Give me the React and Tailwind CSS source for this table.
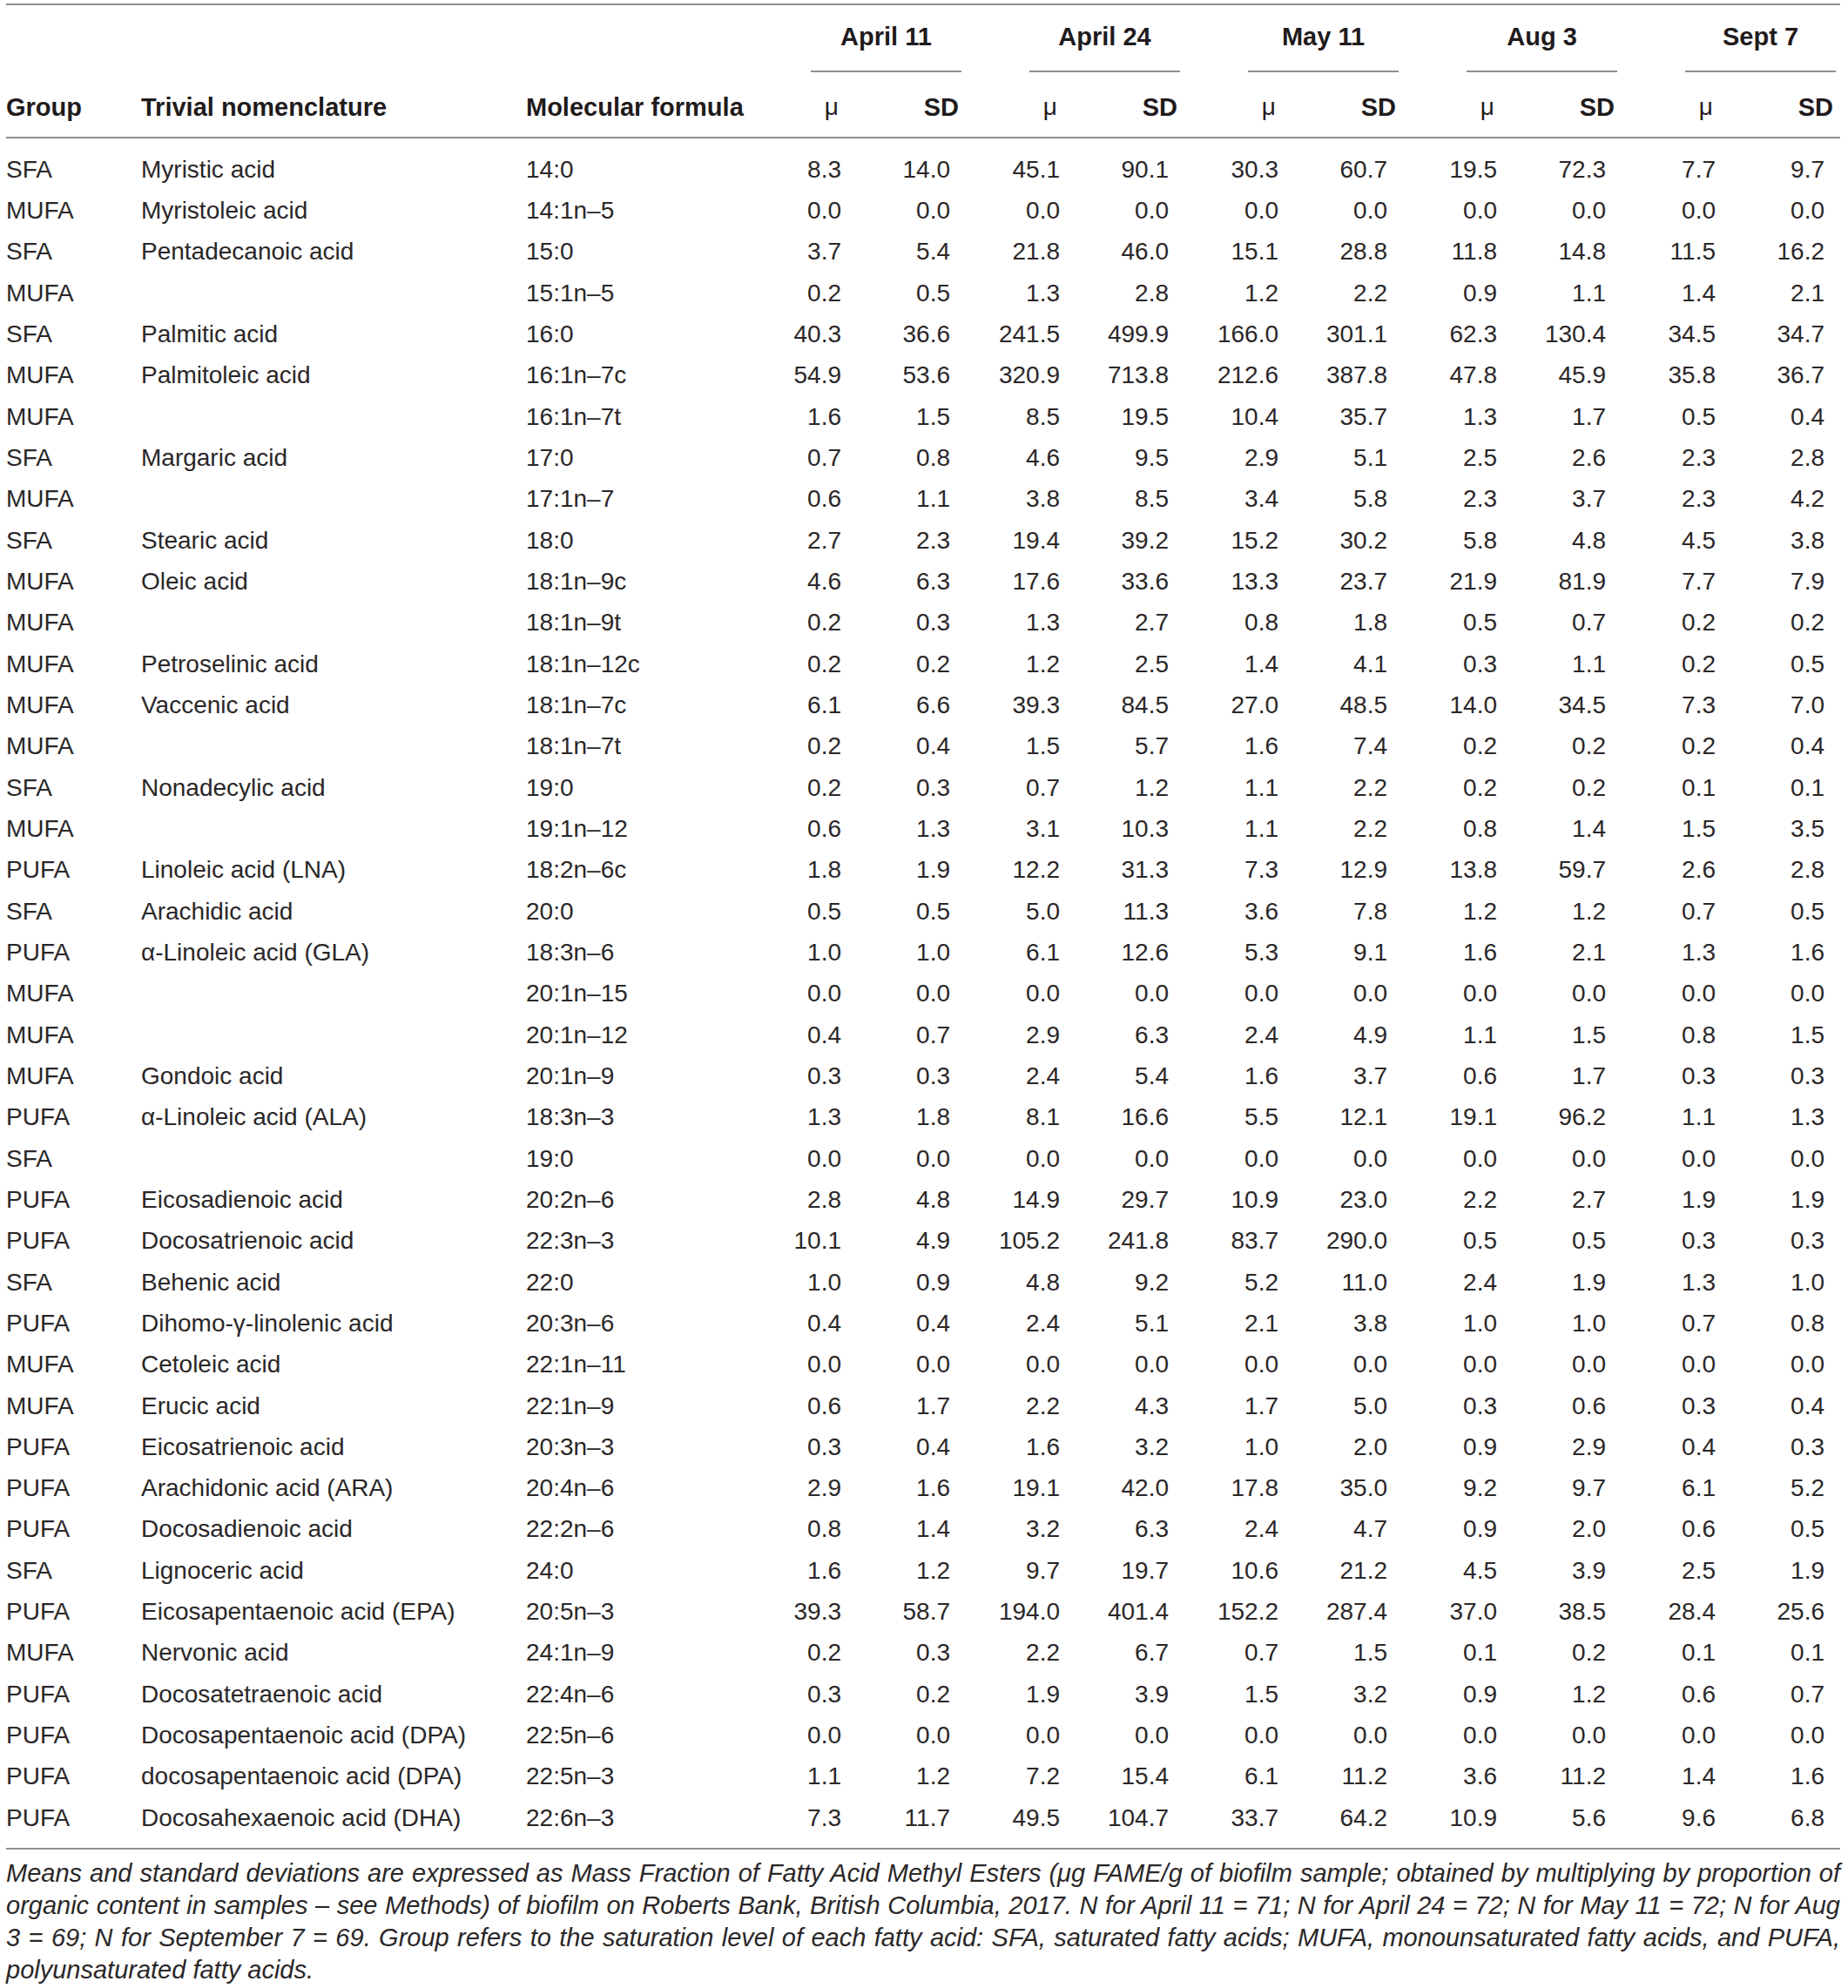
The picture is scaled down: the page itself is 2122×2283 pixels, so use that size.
import React from "react";

const rows = [
  ["SFA", "Myristic acid", "14:0", "8.3 14.0 45.1 90.1 30.3 60.7 19.5 72.3 7.7 9.7"],
  ["MUFA", "Myristoleic acid", "14:1n–5", "0.0 0.0 0.0 0.0 0.0 0.0 0.0 0.0 0.0 0.0"],
  ["SFA", "Pentadecanoic acid", "15:0", "3.7 5.4 21.8 46.0 15.1 28.8 11.8 14.8 11.5 16.2"],
  ["MUFA", "", "15:1n–5", "0.2 0.5 1.3 2.8 1.2 2.2 0.9 1.1 1.4 2.1"],
  ["SFA", "Palmitic acid", "16:0", "40.3 36.6 241.5 499.9 166.0 301.1 62.3 130.4 34.5 34.7"],
  ["MUFA", "Palmitoleic acid", "16:1n–7c", "54.9 53.6 320.9 713.8 212.6 387.8 47.8 45.9 35.8 36.7"],
  ["MUFA", "", "16:1n–7t", "1.6 1.5 8.5 19.5 10.4 35.7 1.3 1.7 0.5 0.4"],
  ["SFA", "Margaric acid", "17:0", "0.7 0.8 4.6 9.5 2.9 5.1 2.5 2.6 2.3 2.8"],
  ["MUFA", "", "17:1n–7", "0.6 1.1 3.8 8.5 3.4 5.8 2.3 3.7 2.3 4.2"],
  ["SFA", "Stearic acid", "18:0", "2.7 2.3 19.4 39.2 15.2 30.2 5.8 4.8 4.5 3.8"],
  ["MUFA", "Oleic acid", "18:1n–9c", "4.6 6.3 17.6 33.6 13.3 23.7 21.9 81.9 7.7 7.9"],
  ["MUFA", "", "18:1n–9t", "0.2 0.3 1.3 2.7 0.8 1.8 0.5 0.7 0.2 0.2"],
  ["MUFA", "Petroselinic acid", "18:1n–12c", "0.2 0.2 1.2 2.5 1.4 4.1 0.3 1.1 0.2 0.5"],
  ["MUFA", "Vaccenic acid", "18:1n–7c", "6.1 6.6 39.3 84.5 27.0 48.5 14.0 34.5 7.3 7.0"],
  ["MUFA", "", "18:1n–7t", "0.2 0.4 1.5 5.7 1.6 7.4 0.2 0.2 0.2 0.4"],
  ["SFA", "Nonadecylic acid", "19:0", "0.2 0.3 0.7 1.2 1.1 2.2 0.2 0.2 0.1 0.1"],
  ["MUFA", "", "19:1n–12", "0.6 1.3 3.1 10.3 1.1 2.2 0.8 1.4 1.5 3.5"],
  ["PUFA", "Linoleic acid (LNA)", "18:2n–6c", "1.8 1.9 12.2 31.3 7.3 12.9 13.8 59.7 2.6 2.8"],
  ["SFA", "Arachidic acid", "20:0", "0.5 0.5 5.0 11.3 3.6 7.8 1.2 1.2 0.7 0.5"],
  ["PUFA", "α-Linoleic acid (GLA)", "18:3n–6", "1.0 1.0 6.1 12.6 5.3 9.1 1.6 2.1 1.3 1.6"],
  ["MUFA", "", "20:1n–15", "0.0 0.0 0.0 0.0 0.0 0.0 0.0 0.0 0.0 0.0"],
  ["MUFA", "", "20:1n–12", "0.4 0.7 2.9 6.3 2.4 4.9 1.1 1.5 0.8 1.5"],
  ["MUFA", "Gondoic acid", "20:1n–9", "0.3 0.3 2.4 5.4 1.6 3.7 0.6 1.7 0.3 0.3"],
  ["PUFA", "α-Linoleic acid (ALA)", "18:3n–3", "1.3 1.8 8.1 16.6 5.5 12.1 19.1 96.2 1.1 1.3"],
  ["SFA", "", "19:0", "0.0 0.0 0.0 0.0 0.0 0.0 0.0 0.0 0.0 0.0"],
  ["PUFA", "Eicosadienoic acid", "20:2n–6", "2.8 4.8 14.9 29.7 10.9 23.0 2.2 2.7 1.9 1.9"],
  ["PUFA", "Docosatrienoic acid", "22:3n–3", "10.1 4.9 105.2 241.8 83.7 290.0 0.5 0.5 0.3 0.3"],
  ["SFA", "Behenic acid", "22:0", "1.0 0.9 4.8 9.2 5.2 11.0 2.4 1.9 1.3 1.0"],
  ["PUFA", "Dihomo-γ-linolenic acid", "20:3n–6", "0.4 0.4 2.4 5.1 2.1 3.8 1.0 1.0 0.7 0.8"],
  ["MUFA", "Cetoleic acid", "22:1n–11", "0.0 0.0 0.0 0.0 0.0 0.0 0.0 0.0 0.0 0.0"],
  ["MUFA", "Erucic acid", "22:1n–9", "0.6 1.7 2.2 4.3 1.7 5.0 0.3 0.6 0.3 0.4"],
  ["PUFA", "Eicosatrienoic acid", "20:3n–3", "0.3 0.4 1.6 3.2 1.0 2.0 0.9 2.9 0.4 0.3"],
  ["PUFA", "Arachidonic acid (ARA)", "20:4n–6", "2.9 1.6 19.1 42.0 17.8 35.0 9.2 9.7 6.1 5.2"],
  ["PUFA", "Docosadienoic acid", "22:2n–6", "0.8 1.4 3.2 6.3 2.4 4.7 0.9 2.0 0.6 0.5"],
  ["SFA", "Lignoceric acid", "24:0", "1.6 1.2 9.7 19.7 10.6 21.2 4.5 3.9 2.5 1.9"],
  ["PUFA", "Eicosapentaenoic acid (EPA)", "20:5n–3", "39.3 58.7 194.0 401.4 152.2 287.4 37.0 38.5 28.4 25.6"],
  ["MUFA", "Nervonic acid", "24:1n–9", "0.2 0.3 2.2 6.7 0.7 1.5 0.1 0.2 0.1 0.1"],
  ["PUFA", "Docosatetraenoic acid", "22:4n–6", "0.3 0.2 1.9 3.9 1.5 3.2 0.9 1.2 0.6 0.7"],
  ["PUFA", "Docosapentaenoic acid (DPA)", "22:5n–6", "0.0 0.0 0.0 0.0 0.0 0.0 0.0 0.0 0.0 0.0"],
  ["PUFA", "docosapentaenoic acid (DPA)", "22:5n–3", "1.1 1.2 7.2 15.4 6.1 11.2 3.6 11.2 1.4 1.6"],
  ["PUFA", "Docosahexaenoic acid (DHA)", "22:6n–3", "7.3 11.7 49.5 104.7 33.7 64.2 10.9 5.6 9.6 6.8"],
];

const dates = ["April 11", "April 24", "May 11", "Aug 3", "Sept 7"];

const GRID =
  "grid grid-cols-[155px_442px_267px_95px_156px_95px_156px_95px_156px_95px_156px_95px_143px]";

function valueClass(i) {
  if (i % 2 === 0) return "text-right";
  if (i === 9) return "text-right pr-[18px]";
  return "text-right pr-[31px]";
}

function sdHeadClass(k) {
  return k === 4
    ? "text-right font-bold text-[29px] pr-[8px]"
    : "text-right font-bold text-[29px] pr-[21px]";
}

function Rule() {
  return <div className="h-[2px] bg-[#8f8f8f]" />;
}

export default function App() {
  return (
    <div
      className="min-h-[2283px] bg-white text-[#2a2728] text-[28px] leading-[28px]"
      style={{ fontFamily: '"Liberation Sans", Arial, sans-serif' }}
    >
      <div className="ml-[7px] w-[2106px] pt-[4px]">
        <Rule />
        {/* header row 1 */}
        <div className={GRID}>
          <div className="col-span-3" />
          {dates.map((d) => (
            <div key={d} className="col-span-2">
              <div className="ml-[60px] w-[173px] pt-[22px] pb-[25px] text-center font-bold text-[29px] text-[#1f1b1c] border-b-2 border-[#8f8f8f]">
                {d}
              </div>
            </div>
          ))}
        </div>
        {/* header row 2 */}
        <div className={GRID + " pt-[26px] pb-[20px] text-[#1f1b1c]"}>
          <div className="font-bold text-[29px]">Group</div>
          <div className="font-bold text-[29px]">Trivial nomenclature</div>
          <div className="font-bold text-[29px]">Molecular formula</div>
          {dates.map((d, k) => (
            <React.Fragment key={d}>
              <div className="text-right pr-[3px]">μ</div>
              <div className={sdHeadClass(k)}>SD</div>
            </React.Fragment>
          ))}
        </div>
        <Rule />
        {/* body */}
        <div className="pt-[12px] pb-[11px]">
          {rows.map((r, idx) => (
            <div key={idx} className={GRID + " h-[47.33px] items-center"}>
              <div>{r[0]}</div>
              <div>{r[1]}</div>
              <div>{r[2]}</div>
              {r[3].split(" ").map((v, i) => (
                <div key={i} className={valueClass(i)}>
                  {v}
                </div>
              ))}
            </div>
          ))}
        </div>
        <Rule />
        {/* footnote */}
        <div className="pt-[9px] italic text-[29px] leading-[37px]">
          <div className="whitespace-nowrap text-justify [text-align-last:justify]">
            Means and standard deviations are expressed as Mass Fraction of Fatty Acid Methyl Esters (μg FAME/g of biofilm sample; obtained by multiplying by proportion of
          </div>
          <div className="whitespace-nowrap text-justify [text-align-last:justify]">
            organic content in samples – see Methods) of biofilm on Roberts Bank, British Columbia, 2017. N for April 11 = 71; N for April 24 = 72; N for May 11 = 72; N for Aug
          </div>
          <div className="whitespace-nowrap text-justify [text-align-last:justify]">
            3 = 69; N for September 7 = 69. Group refers to the saturation level of each fatty acid: SFA, saturated fatty acids; MUFA, monounsaturated fatty acids, and PUFA,
          </div>
          <div className="whitespace-nowrap">polyunsaturated fatty acids.</div>
        </div>
      </div>
    </div>
  );
}
